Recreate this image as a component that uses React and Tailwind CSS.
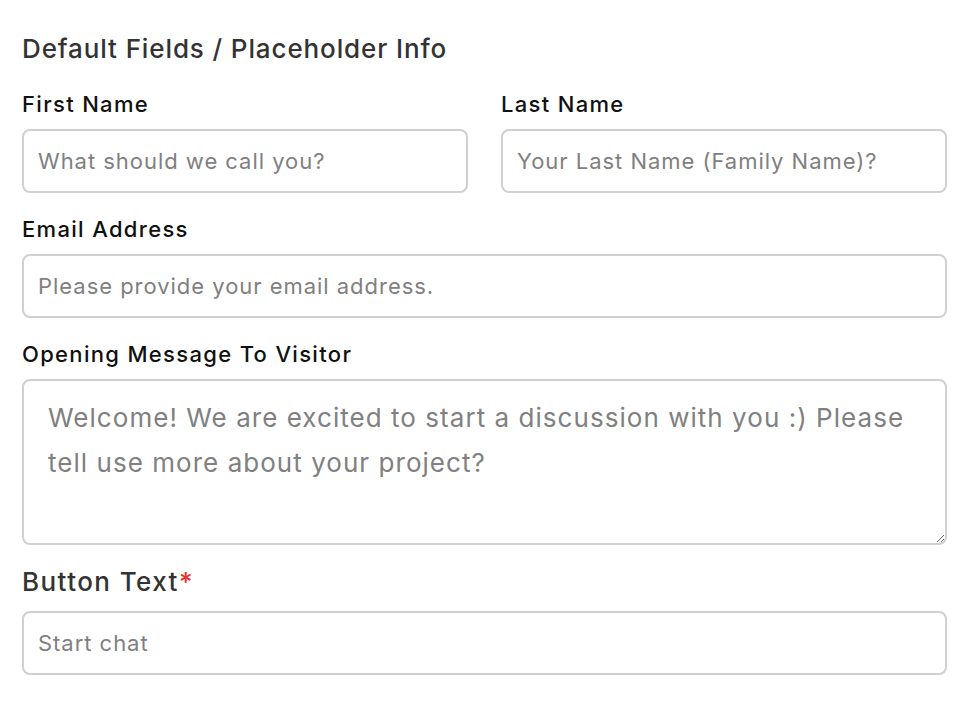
import React from "react";

const font = { fontFamily: "Inter, 'Noto Sans', sans-serif" };

function Label({ children }) {
  return (
    <p className="text-[22px] leading-[28px] font-medium tracking-[0.06em] text-[#111] mb-[11px]">
      {children}
    </p>
  );
}

function Field({ label, placeholder }) {
  return (
    <div className="flex flex-col">
      <Label>{label}</Label>
      <input
        type="text"
        placeholder={placeholder}
        className="h-[64px] w-full rounded-[8px] border-2 border-[#d0d0d0] bg-white px-[14px] text-[22px] tracking-[0.044em] text-[#222] outline-none placeholder:text-[#808080]"
      />
    </div>
  );
}

export default function App() {
  return (
    <div className="min-h-[706px] bg-white pl-[22px] pr-[19px] pt-[33px]" style={font}>
      <h2 className="text-[26px] leading-[32px] font-medium tracking-[0.034em] text-[#333]">
        Default Fields / Placeholder Info
      </h2>

      <div className="mt-[25px] grid grid-cols-2 gap-x-[33px]">
        <Field label="First Name" placeholder="What should we call you?" />
        <Field label="Last Name" placeholder="Your Last Name (Family Name)?" />
      </div>

      <div className="mt-[22px]">
        <Field label="Email Address" placeholder="Please provide your email address." />
      </div>

      <div className="mt-[22px] flex flex-col">
        <Label>Opening Message To Visitor</Label>
        <textarea
          placeholder="Welcome! We are excited to start a discussion with you :) Please tell use more about your project?"
          className="h-[166px] w-full resize-y rounded-[8px] border-2 border-[#d0d0d0] bg-white px-[24px] pt-[14px] text-[26px] leading-[45px] tracking-[0.04em] text-[#222] outline-none placeholder:text-[#808080]"
        />
      </div>

      <div className="mt-[21px] flex flex-col">
        <p className="text-[26px] leading-[32px] font-medium tracking-[0.055em] text-[#333] mb-[13px]">
          Button Text<span className="text-[#e8322b]">*</span>
        </p>
        <input
          type="text"
          placeholder="Start chat"
          className="h-[64px] w-full rounded-[8px] border-2 border-[#d0d0d0] bg-white px-[14px] text-[22px] tracking-[0.044em] text-[#222] outline-none placeholder:text-[#808080]"
        />
      </div>
    </div>
  );
}
